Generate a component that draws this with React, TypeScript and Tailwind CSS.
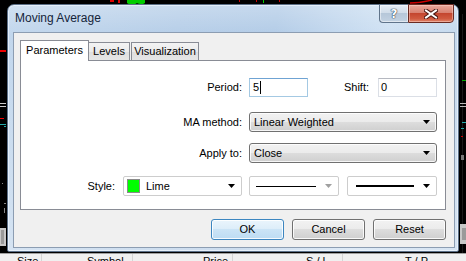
import React from "react";

function Arrow({ color = "#000" }: { color?: string }) {
  return (
    <svg width="7" height="4" viewBox="0 0 7 4" className="shrink-0">
      <path d="M0 0H7L3.5 4Z" fill={color} />
    </svg>
  );
}

function ChartBits() {
  return (
    <svg className="absolute inset-0" width="466" height="253" viewBox="0 0 466 253">
      <rect x="110" y="0" width="4" height="2" fill="#d00" />
      <rect x="118" y="0" width="2" height="3" fill="#d00" />
      <path d="M127 0h18v3c-3 2-6 1-8 0c-3 2-7 2-10 0Z" fill="#0c0" />
      <rect x="239" y="0" width="1" height="2" fill="#c00" />
      <rect x="256" y="0" width="1" height="2" fill="#c00" />
      <rect x="263" y="0" width="1" height="3" fill="#0c0" />
      <rect x="279" y="0" width="1" height="2" fill="#c00" />
      <path d="M410 3c6 0 14-1 22-3" stroke="#c00" strokeWidth="1.5" fill="none" />
      <rect x="0" y="50" width="6" height="2" fill="#e00" />
      <rect x="0" y="103" width="6" height="1" fill="#ccc" />
      <rect x="0" y="106" width="6" height="1" fill="#ccc" />
      <rect x="0" y="118" width="4" height="1" fill="#e00" />
      <rect x="0" y="124" width="6" height="1" fill="#2aa" />
      <rect x="4" y="126" width="2" height="1" fill="#2aa" />
      <rect x="2" y="183" width="1" height="1" fill="#888" />
      <rect x="4" y="203" width="2" height="1" fill="#888" />
      <rect x="4" y="208" width="1" height="5" fill="#888" />
      <rect x="0" y="228" width="6" height="18" fill="#c8c8c8" />
      <rect x="1" y="230" width="3" height="14" fill="#9a9a9a" />
      <rect x="459" y="0" width="7" height="253" fill="#000" />
      <rect x="462" y="14" width="1" height="240" fill="#1a1a1a" />
      <rect x="462" y="80" width="4" height="1" fill="#0a0" />
      <rect x="460" y="103" width="6" height="1" fill="#bbb" />
      <rect x="460" y="106" width="6" height="1" fill="#bbb" />
      <rect x="462" y="122" width="4" height="1" fill="#2aa" />
      <rect x="461" y="128" width="3" height="1" fill="#2aa" />
      <rect x="461" y="136" width="2" height="1" fill="#c00" />
      <rect x="461" y="155" width="3" height="5" fill="#777" />
      <rect x="460" y="224" width="6" height="20" fill="#c8c8c8" />
      <rect x="462" y="228" width="4" height="12" fill="#9a9a9a" />
    </svg>
  );
}

export default function App() {
  const btn =
    "w-[73px] h-[21px] rounded-[3px] border flex items-center justify-center shadow-[inset_0_0_0_1px_rgba(255,255,255,0.85)]";
  const grayBtn =
    "border-[#707070] bg-[linear-gradient(180deg,#f2f2f2_0%,#ebebeb_50%,#dddddd_50%,#cfcfcf_100%)]";
  const whiteCombo =
    "h-[20px] rounded-[2px] border border-[#cdcdcd] bg-white flex items-center";
  return (
    <div className="relative w-[466px] h-[261px] overflow-hidden bg-black font-['Liberation_Sans',Arial,sans-serif] text-[11px] leading-none text-black flex flex-col">
      <div className="relative h-[253px] shrink-0">
        <ChartBits />
        <div className="relative z-10 ml-[7px] mt-[4px] w-[452px] h-[248px] rounded-t-[7px] rounded-b-[2px] border border-[#5b6f87] bg-[linear-gradient(180deg,rgba(255,255,255,0.25)_0%,rgba(255,255,255,0)_12%,rgba(255,255,255,0.35)_100%),linear-gradient(100deg,#c2d7ed_0%,#b6cee8_35%,#b3cce7_55%,#cfe1f3_78%,#c0d5eb_100%)] shadow-[inset_0_0_0_1px_rgba(240,247,253,0.7)] flex flex-col">
          <div className="relative h-[27px] shrink-0 flex items-start justify-between">
            <div className="pl-[7px] pt-[6px] text-[12px] leading-[14px] text-[#14243a]">
              Moving Average
            </div>
            <div className="flex -mt-px mr-[4px]">
              <div className="w-[29px] h-[19px] rounded-bl-[4px] border border-[#60748b] border-r-0 bg-[linear-gradient(180deg,#e4ecf5_0%,#d1dde9_45%,#b6c7d9_50%,#c3d2e2_100%)] flex items-center justify-center shadow-[inset_0_0_0_1px_rgba(255,255,255,0.5)]">
                <span className="font-['DejaVu_Sans',sans-serif] font-bold text-[12px] leading-none text-white [text-shadow:0_0_1px_#2c3e55,0_0_1px_#2c3e55,0_0_1px_#2c3e55]">
                  ?
                </span>
              </div>
              <div className="w-[46px] h-[19px] rounded-br-[4px] border border-[#6a2a22] bg-[linear-gradient(180deg,#e9a99c_0%,#d98272_45%,#c4462f_50%,#d05a40_80%,#e0846a_100%)] flex items-center justify-center shadow-[inset_0_0_0_1px_rgba(255,220,210,0.45)]">
                <svg width="14" height="10" viewBox="0 0 14 10">
                  <path d="M2 1.5L12 8.5M12 1.5L2 8.5" stroke="#4b1712" strokeWidth="4" strokeLinecap="square" />
                  <path d="M2 1.5L12 8.5M12 1.5L2 8.5" stroke="#ffffff" strokeWidth="2" strokeLinecap="square" />
                </svg>
              </div>
            </div>
          </div>
          <div className="ml-[5px] mr-[3px] mb-[3px] flex-1 border border-[#8c9db2] bg-[#f0f0f0] pl-[6px] pt-[7px] flex flex-col">
            <div className="flex items-end h-[21px]">
              <div className="relative z-10 w-[69px] h-[21px] bg-white border border-b-0 border-[#898c95] flex items-center justify-center pb-[1px]">
                Parameters
              </div>
              <div className="w-[41px] h-[18px] mb-px border border-b-0 border-l-0 border-[#898c95] bg-[linear-gradient(180deg,#f3f3f3_0%,#ebebeb_50%,#dedede_50%,#e6e6e6_100%)] flex items-center justify-center">
                Levels
              </div>
              <div className="w-[68px] h-[18px] mb-px ml-px border border-b-0 border-[#898c95] bg-[linear-gradient(180deg,#f3f3f3_0%,#ebebeb_50%,#dedede_50%,#e6e6e6_100%)] flex items-center justify-center">
                Visualization
              </div>
            </div>
            <div className="-mt-px w-[426px] h-[150px] border border-[#898c95] bg-white pt-[17px] flex flex-col">
              <div className="flex h-[19px] items-center">
                <div className="w-[221px] text-right">Period:</div>
                <div className="ml-[7px] w-[59px] h-[19px] border border-[#a4c9e3] border-t-[#6fa3d3] bg-white flex items-center pl-[3px]">
                  <span>5</span>
                  <span className="ml-px w-px h-[13px] bg-black" />
                </div>
                <div className="w-[61px] text-right">Shift:</div>
                <div className="ml-[9px] w-[59px] h-[19px] border border-[#dbdfe6] border-t-[#b5b8c0] bg-white flex items-center pl-[2px]">
                  0
                </div>
              </div>
              <div className="flex h-[20px] items-center mt-[15px]">
                <div className="w-[221px] text-right">MA method:</div>
                <div className={`ml-[7px] w-[188px] h-[20px] rounded-[3px] border ${grayBtn} shadow-[inset_0_0_0_1px_rgba(255,255,255,0.8)] flex items-center justify-between pl-[4px] pr-[6px]`}>
                  <span>Linear Weighted</span>
                  <Arrow />
                </div>
              </div>
              <div className="flex h-[20px] items-center mt-[11px]">
                <div className="w-[221px] text-right">Apply to:</div>
                <div className={`ml-[7px] w-[188px] h-[20px] rounded-[3px] border ${grayBtn} shadow-[inset_0_0_0_1px_rgba(255,255,255,0.8)] flex items-center justify-between pl-[4px] pr-[6px]`}>
                  <span>Close</span>
                  <Arrow />
                </div>
              </div>
              <div className="flex h-[20px] items-center mt-[13px]">
                <div className="w-[94px] text-right">Style:</div>
                <div className={`ml-[8px] w-[119px] ${whiteCombo} pl-[3px] pr-[6px]`}>
                  <span className="w-[13px] h-[14px] border border-[#8a8a8a] bg-[#00ff00] shrink-0" />
                  <span className="ml-[6px] flex-1">Lime</span>
                  <Arrow />
                </div>
                <div className={`ml-[7px] w-[90px] ${whiteCombo} pl-[6px] pr-[6px]`}>
                  <span className="w-[60px] h-px bg-black" />
                  <span className="flex-1" />
                  <Arrow color="#a0a0a0" />
                </div>
                <div className={`ml-[8px] w-[90px] ${whiteCombo} pl-[8px] pr-[6px]`}>
                  <span className="w-[58px] h-[2px] bg-black" />
                  <span className="flex-1" />
                  <Arrow />
                </div>
              </div>
            </div>
            <div className="w-[426px] mt-[9px] flex justify-end gap-[8px]">
              <div className={`${btn} border-[#3c86c0] bg-[linear-gradient(180deg,#eaf5fc_0%,#dcedf9_50%,#cbe4f6_50%,#bddcf3_100%)]`}>
                OK
              </div>
              <div className={`${btn} ${grayBtn}`}>Cancel</div>
              <div className={`${btn} ${grayBtn}`}>Reset</div>
            </div>
          </div>
        </div>
      </div>
      <div className="relative h-[8px] bg-[#f0f0f0] overflow-hidden flex border-t border-[#a0a0a0]">
        <div className="w-[42px] border-r border-[#d5d5d5] pl-[17px] pt-[2px] text-[11px] leading-none">Size</div>
        <div className="w-[91px] border-r border-[#d5d5d5] pl-[45px] pt-[2px] text-[11px] leading-none">Symbol</div>
        <div className="w-[100px] border-r border-[#d5d5d5] pl-[70px] pt-[2px] text-[11px] leading-none">Price</div>
        <div className="w-[110px] border-r border-[#d5d5d5] pl-[73px] pt-[2px] text-[11px] leading-none">S / L</div>
        <div className="flex-1 pl-[62px] pt-[2px] text-[11px] leading-none">T / P</div>
      </div>
    </div>
  );
}
